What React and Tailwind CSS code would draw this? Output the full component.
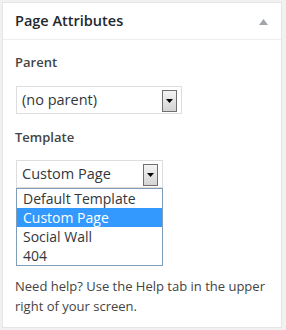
import React from "react";

const font = { fontFamily: '"Open Sans", "Liberation Sans", sans-serif' };

const ArrowButton = () => (
  <span className="absolute right-[4px] top-[3px] flex h-[22px] w-[15px] items-center justify-center border border-[#707070] bg-gradient-to-b from-[#f4f4f4] to-[#d4d4d4]">
    <svg width="7" height="4" viewBox="0 0 7 4">
      <path d="M0 0h7L3.5 4z" fill="#000" />
    </svg>
  </span>
);

const FakeSelect = ({ value, width }) => (
  <div
    className={`relative ml-px flex h-[28px] items-center border border-[#dddddd] bg-white pl-[5px] text-[14.5px] text-[#32373c] ${width}`}
  >
    <span>{value}</span>
    <ArrowButton />
  </div>
);

export default function App() {
  const templates = ["Default Template", "Custom Page", "Social Wall", "404"];

  return (
    <div className="min-h-[330px] bg-[#f1f1f1] pl-[2px] pt-[2px]" style={font}>
      <div className="h-[326px] w-[280px] border border-[#e5e5e5] bg-white">
        <div className="flex h-[37px] items-center justify-between border-b border-[#eeeeee] pl-[12px] pr-[13px]">
          <h2 className="text-[14.5px] font-semibold text-[#23282d]">Page Attributes</h2>
          <svg width="9" height="6" viewBox="0 0 9 6" className="mt-[1px]">
            <path d="M4.5 0L9 6H0z" fill="#a0a5aa" />
          </svg>
        </div>

        <div className="px-[12px]">
          <p className="mt-[13px] mb-[13px] text-[13px] leading-[19.5px] font-semibold text-[#444]">Parent</p>
          <FakeSelect value="(no parent)" width="w-[166px]" />

          <p className="mt-[14px] mb-[13px] text-[13px] leading-[19.5px] font-semibold text-[#444]">Template</p>
          <FakeSelect value="Custom Page" width="w-[147px]" />
          <ul className="ml-px w-[147px] border border-[#7f9db9] bg-white text-[14px] text-[#32373c]">
            {templates.map((t) => (
              <li
                key={t}
                className={`h-[19px] pl-[6px] leading-[19px] ${
                  t === "Custom Page" ? "bg-[#3399ff] text-white" : ""
                }`}
              >
                {t}
              </li>
            ))}
          </ul>

          <p className="mt-[11px] text-[13px] leading-[19.5px] text-[#444]">
            Need help? Use the Help tab in the upper right of your screen.
          </p>
        </div>
      </div>
    </div>
  );
}
